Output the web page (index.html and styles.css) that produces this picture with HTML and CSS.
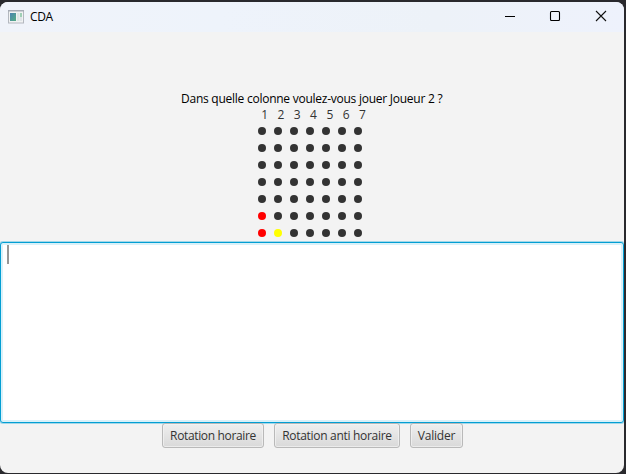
FILE: index.html
```html
<!DOCTYPE html>
<html lang="fr">
<head>
<meta charset="utf-8">
<title>CDA</title>
<link rel="stylesheet" href="styles.css">
</head>
<body>
<div class="window">
  <header class="titlebar">
    <svg class="app-icon" width="16" height="14" viewBox="0 0 16 14">
      <defs><linearGradient id="g" x1="0" y1="0" x2="1" y2="1"><stop offset="0" stop-color="#4a83b0"/><stop offset="1" stop-color="#55ad84"/></linearGradient></defs>
      <rect x=".5" y=".5" width="15" height="12.5" fill="#f1f2f3" stroke="#b4b8bf"/>
      <path d="M0 .8H16" stroke="#a6abb5" stroke-width="1.6"/>
      <rect x="2" y="3" width="6" height="8" fill="url(#g)"/>
      <rect x="9" y="3" width="2.5" height="8" fill="#dce6e4"/>
      <rect x="12" y="3" width="2" height="4" fill="#9fcfb5"/>
      <rect x="12" y="7" width="2" height="4" fill="#dfe4e8"/>
    </svg>
    <span class="title">CDA</span>
    <div class="controls">
      <svg width="46" height="30" viewBox="0 0 46 30"><path d="M19 14.5H29" stroke="#000"/></svg>
      <svg width="46" height="30" viewBox="0 0 46 30"><rect x="18.5" y="9.5" width="9" height="9" rx="1" fill="none" stroke="#000" stroke-width="1.1"/></svg>
      <svg width="46" height="30" viewBox="0 0 46 30"><path d="M18 9L28 19M28 9L18 19" stroke="#111" stroke-width="1.1"/></svg>
    </div>
  </header>
  <main class="content">
    <p class="prompt">Dans quelle colonne voulez-vous jouer Joueur 2 ?</p>
    <div class="numbers"><span>1</span><span>2</span><span>3</span><span>4</span><span>5</span><span>6</span><span>7</span></div>
    <div class="board">
      <i></i><i></i><i></i><i></i><i></i><i></i><i></i>
      <i></i><i></i><i></i><i></i><i></i><i></i><i></i>
      <i></i><i></i><i></i><i></i><i></i><i></i><i></i>
      <i></i><i></i><i></i><i></i><i></i><i></i><i></i>
      <i></i><i></i><i></i><i></i><i></i><i></i><i></i>
      <i class="red"></i><i></i><i></i><i></i><i></i><i></i><i></i>
      <i class="red"></i><i class="yellow"></i><i></i><i></i><i></i><i></i><i></i>
    </div>
    <div class="input"><span class="caret"></span></div>
    <div class="actions">
      <button class="rotate"><span>Rotation horaire</span></button>
      <button class="anti"><span>Rotation anti horaire</span></button>
      <button class="submit"><span>Valider</span></button>
    </div>
  </main>
</div>
</body>
</html>
```
FILE: styles.css
```css
* { box-sizing: border-box; }
body {
  margin: 0;
  padding-top: 2px;
  height: 474px;
  overflow: hidden;
  background: #29292d;
  font: 12px/16px "Open Sans", "Noto Sans", sans-serif;
  color: #000;
}
.window {
  width: 624px;
  height: 471px;
  border-radius: 8px;
  overflow: hidden;
  background: #f3f3f3;
}
.titlebar {
  display: flex;
  align-items: center;
  height: 30px;
  padding-left: 8px;
  background: linear-gradient(90deg, #f0f3fa, #eef3fb 35%, #edf2f8 70%, #eef2fc);
}
.title { margin-left: 6px; letter-spacing: -0.35px; }
.controls { display: flex; margin-left: auto; }
.controls svg { display: block; }
.content { display: flex; flex-direction: column; padding-top: 59px; }
.prompt {
  margin: 0 0 0 181px;
  height: 16px;
  white-space: nowrap;
  letter-spacing: -0.25px;
}
.numbers {
  display: grid;
  grid-template-columns: repeat(7, 16.3px);
  margin-left: 256.5px;
  height: 16px;
  text-align: center;
  color: #333;
}
.board {
  display: grid;
  grid-template-columns: repeat(7, 16px);
  grid-auto-rows: 17px;
  justify-items: center;
  margin-left: 254px;
  height: 119px;
}
.board i {
  width: 8px;
  height: 8px;
  margin-top: 4px;
  border-radius: 50%;
  background: #333;
}
.board .red { background: #f00; }
.board .yellow { background: #ff0; }
.input {
  height: 181px;
  padding: 2px 6px;
  border: 1px solid #039ed3;
  border-radius: 3px;
  background: #fff;
  box-shadow: inset 0 0 0 2px #d9f1f9, 0 0 0 1px #039ed355;
}
.caret { display: block; width: 2px; height: 19px; background: #969696; }
.actions { display: flex; gap: 10px; margin-left: 162px; }
button {
  display: flex;
  justify-content: center;
  align-items: center;
  height: 25px;
  padding: 0;
  border: 1px solid #b9b9b9;
  border-radius: 3px;
  background: linear-gradient(#efefef, #d9d9d9);
  box-shadow: inset 0 0 0 1px #f4f4f4aa;
  font: inherit;
  color: #333;
  white-space: nowrap;
}
.rotate { width: 102px; letter-spacing: -0.35px; }
.anti { width: 126px; letter-spacing: -0.3px; }
.submit { width: 53px; letter-spacing: -0.2px; }
```
